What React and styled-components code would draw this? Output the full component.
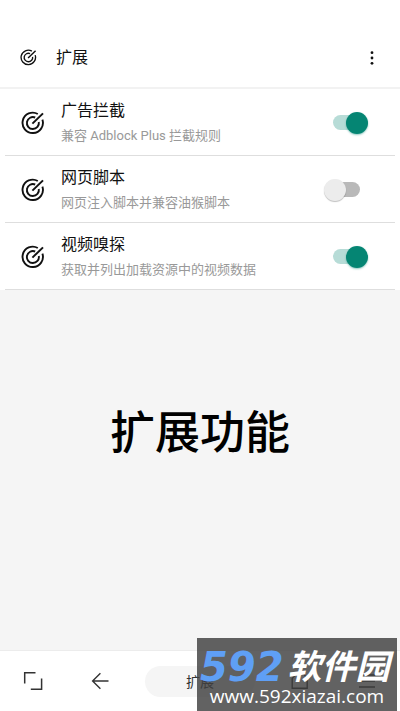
import React from "react";
import styled, { createGlobalStyle } from "styled-components";

const extensions = [
  {
    id: "adblock",
    title: "广告拦截",
    desc: "兼容 Adblock Plus 拦截规则",
    enabled: true,
  },
  {
    id: "script",
    title: "网页脚本",
    desc: "网页注入脚本并兼容油猴脚本",
    enabled: false,
  },
  {
    id: "sniffer",
    title: "视频嗅探",
    desc: "获取并列出加载资源中的视频数据",
    enabled: true,
  },
];

const TargetIcon = ({ size }) => (
  <svg width={size} height={size} viewBox="0 0 24 24" fill="none" stroke="#111" strokeWidth="1.9">
    <path d="M16.8 3A10.2 10.2 0 1 0 21.4 8.6" />
    <path d="M14.2 6.5A6 6 0 1 0 17.8 11" />
    <path d="M11.4 12.6L22 2.4" strokeWidth="2" />
  </svg>
);

const App = () => {
  return (
    <Page>
      <GlobalStyle />
      <Header>
        <TargetIcon size={17} />
        <HeaderTitle>扩展</HeaderTitle>
        <MoreButton aria-label="更多">
          <svg width="6" height="16" viewBox="0 0 6 16" fill="#111">
            <circle cx="3" cy="2.7" r="1.4" />
            <circle cx="3" cy="8" r="1.4" />
            <circle cx="3" cy="13.3" r="1.4" />
          </svg>
        </MoreButton>
      </Header>

      <List>
        {extensions.map((item) => (
          <Row key={item.id}>
            <TargetIcon size={24} />
            <RowLabel htmlFor={item.id}>
              <RowTitle>{item.title}</RowTitle>
              <RowDesc>{item.desc}</RowDesc>
            </RowLabel>
            <Switch id={item.id} type="checkbox" defaultChecked={item.enabled} />
          </Row>
        ))}
      </List>

      <Main>
        <Heading>扩展功能</Heading>
      </Main>

      <BottomBar>
        <NavButton aria-label="全屏">
          <svg width="20" height="20" viewBox="0 0 20 20" fill="none" stroke="#333" strokeWidth="1.5">
            <path d="M1.7 12.5V1.7H12.5M18.6 7.5V18.3H7.8" />
          </svg>
        </NavButton>
        <NavButton aria-label="后退">
          <svg width="18" height="18" viewBox="0 0 18 18" fill="none" stroke="#333" strokeWidth="1.4">
            <path d="M17.5 9H1.6M9.4 1.2L1.6 9L9.4 16.8" />
          </svg>
        </NavButton>
        <Pill>扩展</Pill>
        <NavButton aria-label="主页">
          <svg width="18" height="18" viewBox="0 0 18 18" fill="none" stroke="#222" strokeWidth="1.4">
            <path d="M1.2 6.6L4.6 2.4H13L16.2 6.6V16.2H1.2Z" />
          </svg>
        </NavButton>
        <NavButton aria-label="菜单">
          <svg width="18" height="16" viewBox="0 0 18 16" stroke="#222" strokeWidth="1.4">
            <path d="M1 2H17M1 8H17M1 14H17" />
          </svg>
        </NavButton>
      </BottomBar>

      {/* 右下角水印，盖在底栏上面 */}
      <Watermark>
        <Brand>
          <BrandNumber>592</BrandNumber>
          <BrandName>软件园</BrandName>
        </Brand>
        <Site>www.592xiazai.com</Site>
      </Watermark>
    </Page>
  );
};

const GlobalStyle = createGlobalStyle`
  * {
    box-sizing: border-box;
  }
  body {
    margin: 0;
    font-family: Roboto, "Noto Sans CJK SC", sans-serif;
    color: #111;
  }
  button {
    border: 0;
    padding: 0;
    background: none;
    font: inherit;
    color: inherit;
    cursor: pointer;
  }
`;

const Page = styled.div`
  position: relative;
  display: flex;
  flex-direction: column;
  min-height: 100vh;
  background: #f5f5f5;
`;

const Header = styled.header`
  display: flex;
  align-items: center;
  padding: 28px 20px 0;
  height: 89px;
  background: #fff;
  border-bottom: 2px solid #f2f2f2;
`;

const HeaderTitle = styled.h1`
  flex: 1;
  margin: 0 0 0 19px;
  font-size: 16px;
  line-height: 24px;
  font-weight: 400;
`;

const MoreButton = styled.button`
  display: flex;
  justify-content: center;
  width: 16px;
`;

const List = styled.div`
  padding: 0 5px;
  background: #fff;
`;

const Row = styled.div`
  display: flex;
  align-items: center;
  padding: 10px 27px 9px 16px;
  border-bottom: 1px solid #dedede;
`;

const RowLabel = styled.label`
  flex: 1;
  margin-left: 16px;
`;

const RowTitle = styled.div`
  font-size: 16px;
  line-height: 24px;
`;

const RowDesc = styled.div`
  padding-top: 3px;
  font-size: 13px;
  line-height: 20px;
  color: #999;
`;

const Switch = styled.input`
  appearance: none;
  display: flex;
  align-items: center;
  justify-content: center;
  position: relative;
  width: 44px;
  height: 22px;
  margin: 0;
  cursor: pointer;

  &::before {
    content: "";
    width: 27px;
    height: 15px;
    border-radius: 8px;
    background: #b9b9b9;
  }

  &::after {
    content: "";
    position: absolute;
    left: 0;
    top: 0;
    width: 22px;
    height: 22px;
    border-radius: 50%;
    background: #ececec;
    box-shadow: 0 1px 1px rgba(0, 0, 0, 0.25);
  }

  &:checked::before {
    background: #b7dcd7;
  }

  &:checked::after {
    left: 22px;
    background: #058573;
    box-shadow: 0 1px 2px rgba(5, 133, 115, 0.45);
  }
`;

const Main = styled.main`
  flex: 1;
  padding-top: 107px;
  text-align: center;
`;

const Heading = styled.h2`
  margin: 0;
  font-family: "Noto Sans CJK SC", sans-serif;
  font-size: 45px;
  line-height: 66px;
  font-weight: 500;
  color: #000;
`;

const BottomBar = styled.nav`
  display: grid;
  grid-template-columns: 1fr 1fr 2fr 1fr 1fr;
  align-items: center;
  height: 61px;
  background: #fff;
  border-top: 1px solid #ececec;
`;

const NavButton = styled.button`
  display: flex;
  align-items: center;
  justify-content: center;
  height: 100%;
`;

const Pill = styled.button`
  margin: 0 12px;
  height: 31px;
  border-radius: 16px;
  && {
    background: #f5f5f5;
    font-size: 14px;
    color: #333;
  }
`;

const Watermark = styled.div`
  position: absolute;
  right: 3px;
  bottom: 0;
  width: 200px;
  height: 73px;
  padding: 10px 3px 0;
  background: rgba(64, 64, 64, 0.82);
  white-space: nowrap;
`;

const Brand = styled.div`
  display: flex;
  align-items: flex-start;
  gap: 4px;
  height: 38px;
  font-style: italic;
  font-weight: 700;
`;

const BrandNumber = styled.span`
  font-family: "DejaVu Sans", sans-serif;
  font-size: 40px;
  line-height: 38px;
  color: #5f9ff5;
`;

const BrandName = styled.span`
  font-family: "Noto Sans CJK SC", sans-serif;
  font-size: 34px;
  line-height: 34px;
  color: #fff;
`;

const Site = styled.div`
  font-family: "Open Sans", sans-serif;
  font-size: 19px;
  line-height: 20px;
  font-weight: 500;
  text-align: center;
  color: #fff;
`;

export default App;
